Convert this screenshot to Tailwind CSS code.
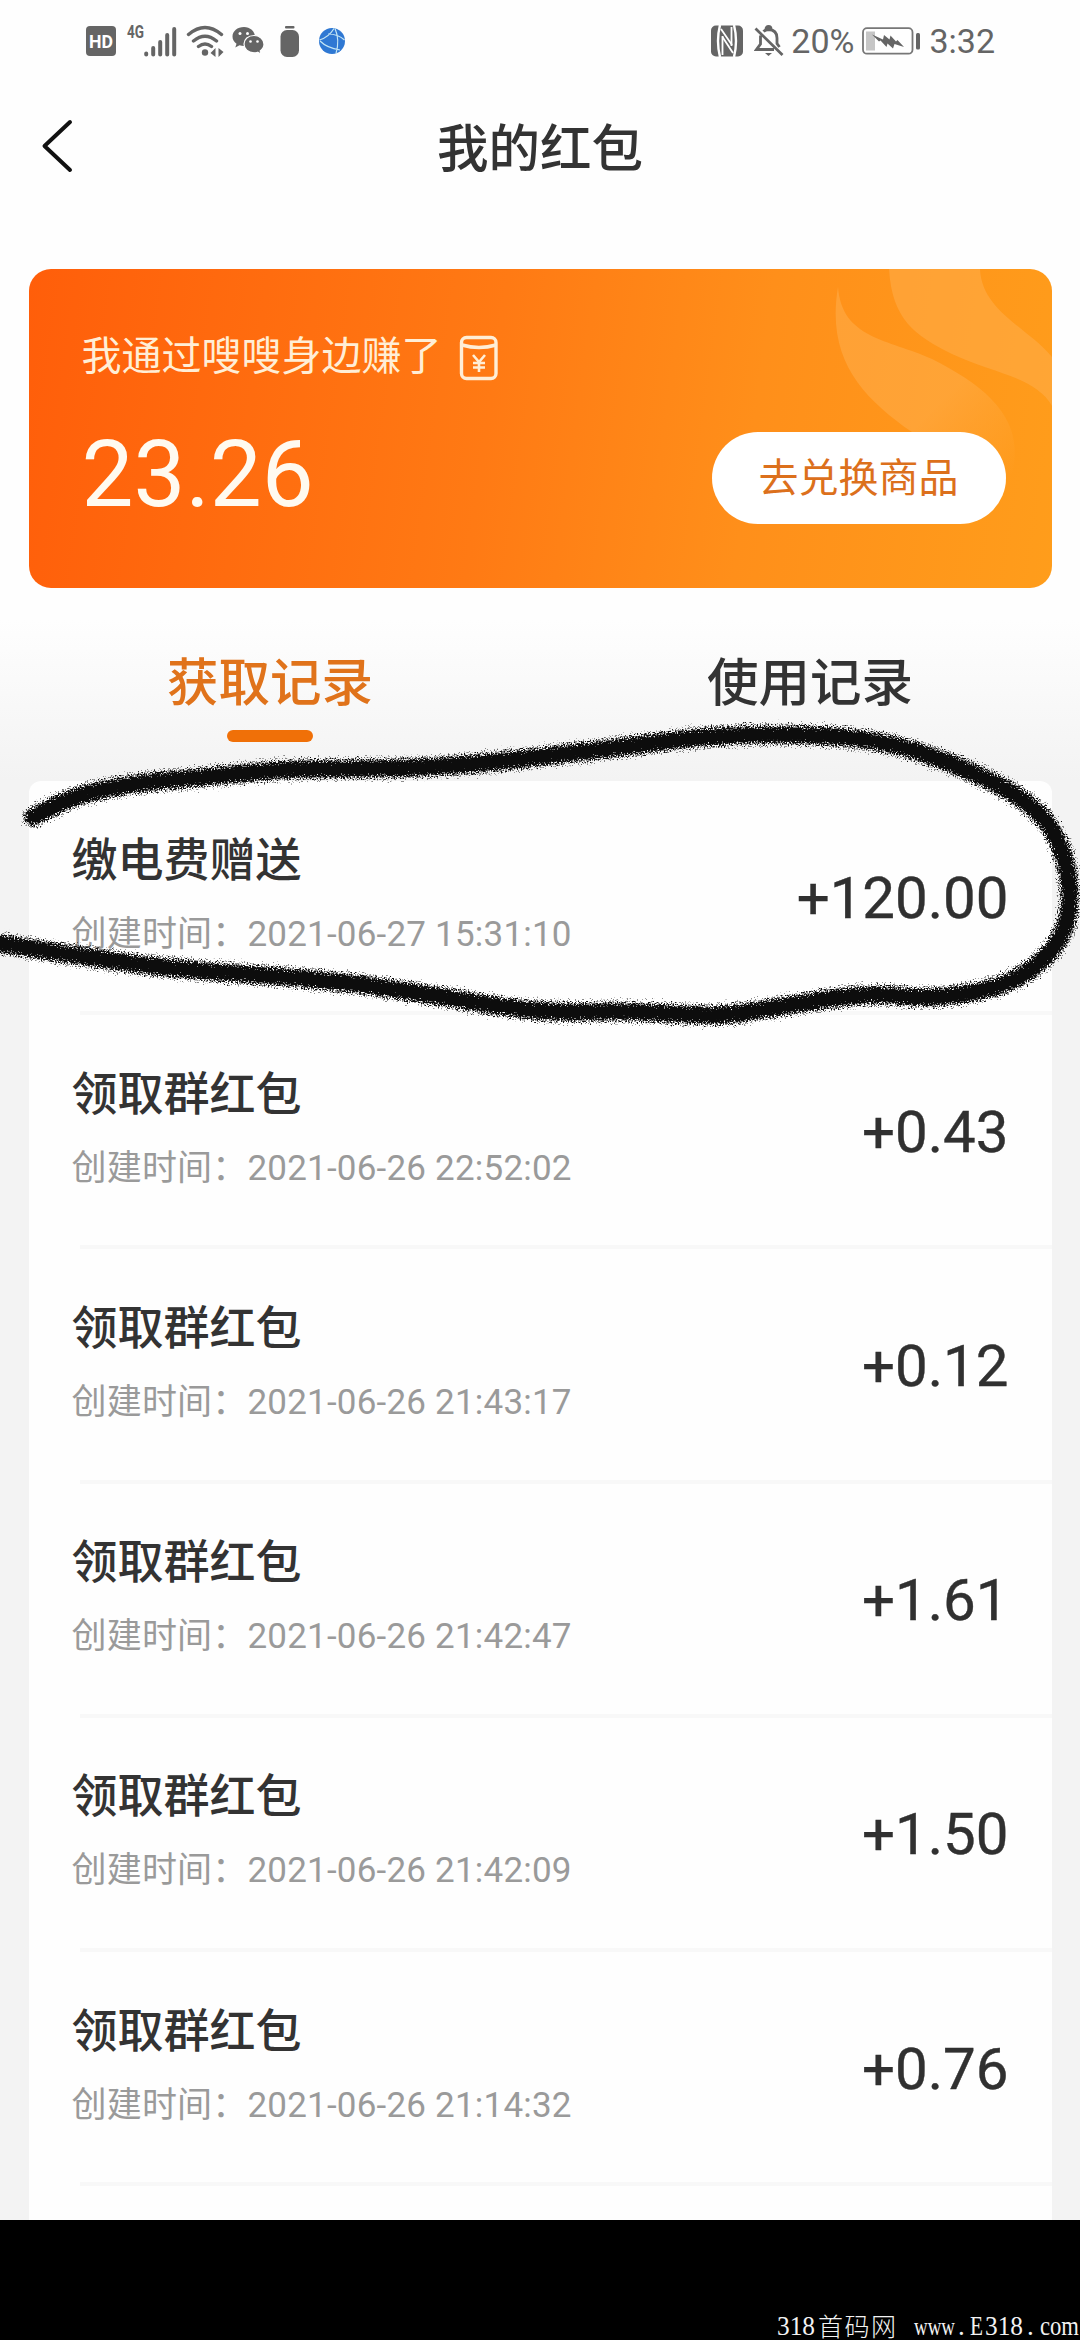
<!DOCTYPE html>
<html lang="zh-CN">
<head>
  <meta charset="UTF-8" />
  <title>我的红包</title>
  <script src="https://cdn.jsdelivr.net/npm/@tailwindcss/browser@4"></script>
</head>
<body class="bg-black font-[Roboto,'Noto_Sans_CJK_SC',sans-serif]">
<div class="relative w-[1080px] h-[2340px] overflow-hidden flex flex-col">
  <div class="h-[2220px] shrink-0 overflow-hidden flex flex-col bg-[linear-gradient(to_bottom,#fefefe_620px,#f3f3f3_780px)]">
    <!-- status bar -->
    <div class="h-[82px] shrink-0 flex items-center pl-[86px] pr-[85px] text-[#656565]">
      <svg class="w-[30px] h-[30px] shrink-0 overflow-visible" viewBox="0 0 30 30">
        <rect width="30" height="30" rx="4" fill="#656565" />
        <text x="15" y="21.5" text-anchor="middle" textLength="24" lengthAdjust="spacingAndGlyphs" class="text-[18px] font-bold fill-white">HD</text>
      </svg>
      <svg class="ml-[11px] w-[52px] h-[32px] shrink-0 overflow-visible" viewBox="0 0 52 32" fill="none" stroke="#656565" stroke-width="4" stroke-linecap="round">
        <text x="0" y="13" textLength="17" lengthAdjust="spacingAndGlyphs" stroke="none" class="text-[18px] font-bold fill-[#656565]">4G</text>
        <path d="M19.200 28.5v1M26.200 23v6.5M33.200 17v12.5M40.200 10v19.5M47.200 4v25.5" />
      </svg>
      <svg class="ml-[7px] w-[39px] h-[32px] shrink-0" viewBox="0 0 39 32" fill="none" stroke="#656565" stroke-width="3.4" stroke-linecap="round">
        <path d="M2.500 9.500Q19 -4.500 35.500 9.500M7.500 16Q19 6.500 30.500 16M12.500 21.500Q19 16.500 25.500 21.500" />
        <circle cx="19" cy="27.500" r="3.200" fill="#656565" stroke="none" />
        <path d="M29.500 23v9l-5-4zM32.500 23v9l5-5z" fill="#656565" stroke="none" />
      </svg>
      <svg class="ml-[7px] w-[33px] h-[28px] shrink-0" viewBox="0 0 33 28">
        <path d="M12 0C5.400 0 .5 4.200.5 9.500c0 3 1.500 5.400 4 7.200l-1.200 3.800 4.200-2.200c1.500.5 3 .7 4.500.7 6 0 11-4 11-9.300S18 0 12 0z" fill="#656565" />
        <path d="M22 8.500c-6 0-10 3.800-10 8.600s4 8.700 10 8.700c1.300 0 2.500-.2 3.700-.6l3.500 2-1-3.300c2.300-1.600 3.800-3.900 3.800-6.600 0-5-4.500-8.800-10-8.800z" fill="#656565" stroke="#fff" stroke-width="1.200" />
        <g fill="#fff"><circle cx="8" cy="6.500" r="1.500" /><circle cx="15.500" cy="6.500" r="1.500" /><circle cx="18.500" cy="14.500" r="1.300" /><circle cx="25.500" cy="14.500" r="1.300" /></g>
      </svg>
      <svg class="ml-[15px] w-[20px] h-[33px] shrink-0" viewBox="0 0 20 33" fill="#656565">
        <rect x="5" y="1" width="9.500" height="2.500" rx="1" />
        <rect x=".5" y="5" width="18.500" height="27" rx="6.500" />
      </svg>
      <svg class="ml-[18px] w-[28px] h-[28px] shrink-0" viewBox="0 0 28 28">
        <circle cx="14" cy="14" r="13" fill="#2f78d3" />
        <path d="M1.500 13Q11 10 16 1.500M2 14Q9 21 22 23M10 7Q20 7 26.500 13M17 1.500Q22 13 18 26.500" fill="none" stroke="#c5e6f5" stroke-width="1.200" />
      </svg>
      <div class="grow"></div>
      <svg class="w-[32px] h-[32px] shrink-0" viewBox="0 0 32 32">
        <rect y=".5" width="32" height="31" rx="5" fill="#656565" />
        <path d="M9 0Q5 16 9 32M23 0Q27 16 23 32" fill="none" stroke="#fff" stroke-width="2.400" />
        <path d="M11.500 11V30M20.500 2V21" stroke="#fff" stroke-width="1.800" />
        <path d="M10 4L21 20M11.500 12L22 28" stroke="#fff" stroke-width="1.800" />
      </svg>
      <svg class="ml-[11px] w-[30px] h-[32px] shrink-0" viewBox="0 0 30 32" fill="none" stroke="#656565" stroke-width="2.800">
        <path d="M1.500 3.500L28.500 30M6.500 10.500V19L2.500 24.500H20M9.500 6.500Q11.500 4.500 14.500 4.500Q23 5 23 13V18.500L25.500 22M12 4Q12 1.500 14.500 1.500T17 4" />
        <path d="M11 28h7l-3.500 3z" fill="#656565" stroke="none" />
      </svg>
      <span class="ml-[7px] text-[34px] leading-[40px] whitespace-nowrap">20%</span>
      <svg class="ml-[8px] w-[60px] h-[28px] shrink-0" viewBox="0 0 60 28">
        <rect x="1" y="1.200" width="49.500" height="25.500" rx="4" fill="#fff" stroke="#777" stroke-width="1.800" />
        <rect x="4" y="4.500" width="9" height="19" fill="#c6c6c6" />
        <path d="M10 7.500l11 5 1-4.500 5.500 4.500 1-4 5.500 6 1.500-1.500L42 20l-9.500-3-1.500 4.500-5.500-5-1 3.500-6-6.500-1.500 1z" fill="#656565" />
        <rect x="54" y="6" width="4" height="16.500" rx="1.500" fill="#656565" />
      </svg>
      <span class="ml-[7px] text-[34px] leading-[40px]">3:32</span>
    </div>

    <!-- header -->
    <div class="h-[187px] shrink-0 grid grid-cols-[200px_1fr_200px] items-start pt-[36px]">
      <svg class="ml-[40px] w-[34px] h-[56px]" viewBox="0 0 34 56" fill="none" stroke="#111" stroke-width="4" stroke-linecap="round" stroke-linejoin="round">
        <path d="M30 4L4.500 28L30 52" />
      </svg>
      <h1 class="mt-[2px] text-center text-[51.500px] leading-[60px] font-medium text-[#333]">我的红包</h1>
    </div>

    <!-- balance card -->
    <div class="relative mx-[28.500px] h-[319px] shrink-0 rounded-[22px] overflow-hidden bg-[linear-gradient(98deg,#ff5e0a,#ff7a14_45%,#ff8f1a_70%,#ff9d1b)]">
      <svg class="absolute right-0 top-0 w-[230px] h-[220px]" viewBox="0 0 230 220">
        <defs>
          <linearGradient id="wave" x1="0" y1="0" x2="1" y2="1">
            <stop offset="0.6" stop-color="#ffb050" stop-opacity=".5" />
            <stop offset="1" stop-color="#ffb050" stop-opacity="0" />
          </linearGradient>
        </defs>
        <path d="M16 18C20 70 66 70 110 90C165 118 204 150 190 205L150 200Q120 185 90 163C40 128 4 90 16 18Z" fill="url(#wave)" />
        <path d="M67 0H158C160 42 205 58 230 88V137C214 108 170 104 130 85C92 66 70 50 67 0Z" fill="#ffb050" fill-opacity=".5" />
      </svg>
      <div class="relative h-full px-[53px] pt-[58px] flex flex-col">
        <div class="flex items-center">
          <p class="text-[40px] leading-[60px] text-[#ffeed6]">我通过嗖嗖身边赚了</p>
          <svg class="ml-[17px] mt-[2px] w-[40px] h-[46px]" viewBox="0 0 40 46" fill="none" stroke="#ffeed6" stroke-width="3.400">
            <rect x="2.500" y="2.500" width="34.500" height="41" rx="5" />
            <path d="M3 10Q20 15 37 10" />
            <path d="M14 20l6 7 6-7M20 27v10M14 28h12M14 32.500h12" stroke-width="2.600" />
          </svg>
        </div>
        <div class="flex items-center justify-between mt-[36px] -mr-[7px]">
          <span class="-mt-[3px] text-[92.500px] leading-[110px] text-[#fffaf0]">23.26</span>
          <button class="mt-[2px] pt-[3px] w-[294px] h-[92px] rounded-full bg-white text-[40px] leading-[60px] text-[#dc701c]">去兑换商品</button>
        </div>
      </div>
    </div>

    <!-- tabs -->
    <div class="h-[193px] shrink-0 grid grid-cols-2 pt-[66px] text-[51.500px] leading-[60px] font-medium text-[#333]">
      <div class="flex flex-col items-center text-[#e0731b]">
        获取记录
        <div class="mt-[16px] w-[86px] h-[12px] rounded-full bg-[#f07008]"></div>
      </div>
      <div class="text-center">使用记录</div>
    </div>

    <!-- records -->
    <div id="records" class="mx-[28.500px] grow rounded-t-[12px] bg-[#fefefe]"></div>
  </div>

  <!-- footer -->
  <div class="h-[120px] shrink-0 flex items-end justify-end bg-black">
    <svg class="w-[304px] h-[32px] overflow-visible" viewBox="0 0 304 32" fill="#f2f2f2" font-size="27">
      <g font-family="Liberation Serif, serif">
        <text x="1" y="27" textLength="38" lengthAdjust="spacingAndGlyphs">318</text>
        <text x="138" y="27" font-size="25" textLength="41" lengthAdjust="spacingAndGlyphs">www</text>
        <text x="182" y="27">.</text>
        <text x="194" y="27" textLength="13" lengthAdjust="spacingAndGlyphs">E</text>
        <text x="209" y="27" textLength="38" lengthAdjust="spacingAndGlyphs">318</text>
        <text x="251" y="27">.</text>
        <text x="264" y="27" textLength="39" lengthAdjust="spacingAndGlyphs">com</text>
      </g>
      <text x="42" y="28" font-size="25" font-weight="300" textLength="78" font-family="Noto Sans CJK SC, sans-serif">首码网</text>
    </svg>
  </div>

  <!-- pen mark over the first record -->
  <svg class="absolute left-0 top-0 w-[1080px] h-[2340px] pointer-events-none" viewBox="0 0 1080 2340" fill="none" stroke="#0c0c0c" stroke-linecap="round" stroke-linejoin="round">
    <filter id="rough" filterUnits="userSpaceOnUse" x="-20" y="700" width="1110" height="350">
      <feTurbulence type="fractalNoise" baseFrequency="0.7" numOctaves="2" seed="4" result="noise" />
      <feDisplacementMap in="SourceGraphic" in2="noise" scale="16" xChannelSelector="R" yChannelSelector="G" />
    </filter>
    <g filter="url(#rough)" transform="translate(0 1)">
      <path class="pen" stroke-width="20" stroke-opacity=".45" />
      <path class="pen" stroke-width="16" />
    </g>
  </svg>
</div>

<script>
  const records = [
    { title: "缴电费赠送", time: "2021-06-27 15:31:10", amount: "+120.00" },
    { title: "领取群红包", time: "2021-06-26 22:52:02", amount: "+0.43" },
    { title: "领取群红包", time: "2021-06-26 21:43:17", amount: "+0.12" },
    { title: "领取群红包", time: "2021-06-26 21:42:47", amount: "+1.61" },
    { title: "领取群红包", time: "2021-06-26 21:42:09", amount: "+1.50" },
    { title: "领取群红包", time: "2021-06-26 21:14:32", amount: "+0.76" },
  ];

  document.getElementById("records").innerHTML = records
    .map(
      (r) => `
      <div class="h-[234.200px] flex flex-col">
        <div class="grow pl-[43px] pr-[43px] flex items-center justify-between">
          <div class="flex flex-col">
            <div class="text-[46px] leading-[60px] font-medium text-[#333]">${r.title}</div>
            <div class="mt-[17px] text-[35px] leading-[56px] tracking-[0.2px] text-[#9a9a9a]">创建时间：${r.time}</div>
          </div>
          <div class="mt-[3px] text-[58.200px] leading-[70px] text-[#303030] [-webkit-text-stroke:0.4px_#303030]">${r.amount}</div>
        </div>
        <div class="ml-[51px] h-[4px] shrink-0 bg-[#f8f8f8]"></div>
      </div>`
    )
    .join("");

  const points = [
    [33, 816], [55, 804], [86, 792], [138, 782], [207, 776], [286, 768], [344, 768],
    [413, 767], [475, 763], [540, 756], [616, 747], [705, 735], [795, 733], [857, 737],
    [905, 746], [953, 763], [998, 783], [1040, 810], [1063, 847], [1072, 895],
    [1064, 935], [1036, 967], [998, 987], [953, 995], [919, 997], [877, 993],
    [826, 998], [774, 1007], [722, 1015], [678, 1013], [619, 1010], [540, 1012],
    [448, 997], [362, 983], [275, 975], [172, 968], [79, 955], [-10, 941],
  ];
  let d = `M${points[0]}`;
  for (let i = 1; i < points.length - 1; i++) {
    const [x, y] = points[i];
    const [nx, ny] = points[i + 1];
    d += `Q${x},${y} ${(x + nx) / 2},${(y + ny) / 2}`;
  }
  d += `L${points[points.length - 1]}`;
  document.querySelectorAll(".pen").forEach((p) => p.setAttribute("d", d));
</script>
</body>
</html>
